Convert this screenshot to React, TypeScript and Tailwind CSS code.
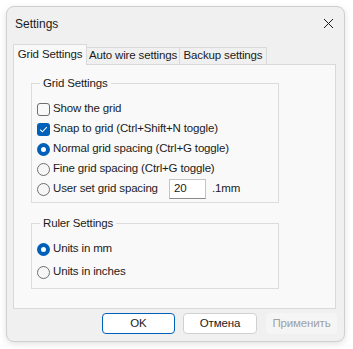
import React from "react";

const Check = ({ checked }: { checked?: boolean }) =>
    checked ? (
        <span className="w-[13px] h-[13px] rounded-[3px] bg-[#005fb8] flex items-center justify-center shrink-0">
            <svg width="9" height="9" viewBox="0 0 9 9">
                <path d="M1.2 4.6 L3.4 6.8 L7.8 2.2" fill="none" stroke="#fff" strokeWidth="1.1" />
            </svg>
        </span>
    ) : (
        <span className="w-[13px] h-[13px] rounded-[3px] border border-[#6e6e6e] bg-[#f9f9f9] shrink-0" />
    );

const Radio = ({ checked }: { checked?: boolean }) =>
    checked ? (
        <span className="w-[13px] h-[13px] rounded-full bg-[#005fb8] flex items-center justify-center shrink-0">
            <span className="w-[5px] h-[5px] rounded-full bg-white" />
        </span>
    ) : (
        <span className="w-[13px] h-[13px] rounded-full border border-[#6e6e6e] bg-[#f6f6f6] shrink-0" />
    );

const Row = ({ children, className = "" }: { children: React.ReactNode; className?: string }) => (
    <div className={"h-5 flex items-center gap-[3px] whitespace-nowrap " + className}>{children}</div>
);

export default function App() {
    return (
        <div
            className="w-[353px] h-[349px] bg-white pt-[6px] pl-[6px] text-[11.5px] tracking-[-0.15px] text-[#1b1b1b]"
            style={{ fontFamily: '"Liberation Sans", Arial, sans-serif' }}
        >
            <div className="w-[339px] h-[336px] rounded-[8px] border border-[#cfcfcf] bg-[#f0f0f0] shadow-[0_2px_6px_rgba(0,0,0,0.12)] flex flex-col">
                {/* title bar */}
                <div className="h-[31px] flex items-center justify-between pl-[8px] pr-[10px]">
                    <span className="pt-[2px] text-[12px] tracking-normal">Settings</span>
                    <svg width="11" height="11" viewBox="0 0 11 11" className="mt-[2px]">
                        <path d="M1 1 L10 10 M10 1 L1 10" stroke="#1b1b1b" strokeWidth="1" />
                    </svg>
                </div>

                {/* tabs */}
                <div className="mt-[6px] ml-[6px] h-[20px] flex items-end relative z-10 whitespace-nowrap">
                    <div className="h-[21px] -mb-px w-[74px] bg-[#f9f9f9] border border-b-0 border-[#d9d9d9] flex items-center justify-center self-start">
                        Grid Settings
                    </div>
                    <div className="h-[17px] w-[93px] border-t border-r border-[#d9d9d9] bg-[#f0f0f0] flex items-center justify-center">
                        Auto wire settings
                    </div>
                    <div className="h-[17px] w-[87px] border-t border-r border-[#d9d9d9] bg-[#f0f0f0] flex items-center justify-center">
                        Backup settings
                    </div>
                </div>

                {/* panel */}
                <div className="ml-[6px] w-[323px] h-[245px] border border-[#d9d9d9] bg-[#f9f9f9] pl-[17px] pt-[10px]">
                    <fieldset className="w-[248px] border border-[#dcdcdc] pl-[5px] pt-[8px] pb-[3px]">
                        <legend className="ml-[3px] px-[3px] leading-4">Grid Settings</legend>
                        <Row>
                            <Check />
                            <span>Show the grid</span>
                        </Row>
                        <Row>
                            <Check checked />
                            <span>Snap to grid (Ctrl+Shift+N toggle)</span>
                        </Row>
                        <Row>
                            <Radio checked />
                            <span>Normal grid spacing (Ctrl+G toggle)</span>
                        </Row>
                        <Row>
                            <Radio />
                            <span>Fine grid spacing (Ctrl+G toggle)</span>
                        </Row>
                        <Row>
                            <Radio />
                            <span className="w-[113px]">User set grid spacing</span>
                            <span className="w-[37px] h-[20px] bg-white border border-[#c4c4c4] border-b-[#8a8a8a] flex items-center pl-[4px]">
                                20
                            </span>
                            <span className="ml-[3px]">.1mm</span>
                        </Row>
                    </fieldset>

                    <fieldset className="mt-[12px] w-[248px] border border-[#dcdcdc] pl-[5px] pt-[8px] pb-[6px]">
                        <legend className="ml-[3px] px-[3px] leading-4">Ruler Settings</legend>
                        <Row>
                            <Radio checked />
                            <span>Units in mm</span>
                        </Row>
                        <Row className="mt-[3px]">
                            <Radio />
                            <span>Units in inches</span>
                        </Row>
                    </fieldset>
                </div>

                {/* buttons */}
                <div className="mt-[4px] flex pl-[95px]">
                    <button className="w-[73px] h-[21px] rounded-[4px] border border-[#005fb8] bg-white">OK</button>
                    <button className="ml-[8px] w-[74px] h-[21px] rounded-[4px] border border-[#d0d0d0] bg-white">
                        Отмена
                    </button>
                    <button className="ml-[9px] w-[71px] h-[21px] rounded-[4px] bg-[#f5f5f5] text-[#a0a0a0]">
                        Применить
                    </button>
                </div>
            </div>
        </div>
    );
}
